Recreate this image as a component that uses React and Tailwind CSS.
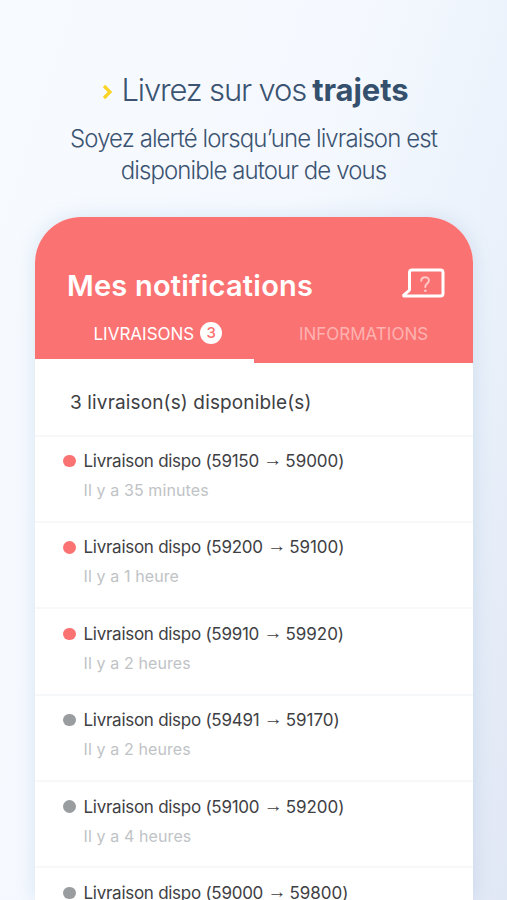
import React from "react";

const deliveries = [
  { from: "59150", to: "59000", time: "Il y a 35 minutes", unread: true },
  { from: "59200", to: "59100", time: "Il y a 1 heure", unread: true },
  { from: "59910", to: "59920", time: "Il y a 2 heures", unread: true },
  { from: "59491", to: "59170", time: "Il y a 2 heures", unread: false },
  { from: "59100", to: "59200", time: "Il y a 4 heures", unread: false },
  { from: "59000", to: "59800", time: "", unread: false },
];

const HelpIcon = () => (
  <svg className="h-[32px] w-[44px]" viewBox="0 0 44 32" fill="none">
    <path
      d="M7.500 22V4.500Q7.500 2 10 2H38.500Q41 2 41 4.500V25.500Q41 28 38.500 28H1.800Q1.400 27.200 2.200 26.600L6.200 23.400Q7.500 22.700 7.500 21.500"
      stroke="white"
      strokeWidth="3"
      strokeLinejoin="round"
    />
    <path
      d="M19.300 12.800C19.300 7.900 26.900 8.200 26.900 12.500C26.900 15.800 23.300 15.400 23.300 19"
      stroke="#ffc9c9"
      strokeWidth="2"
      strokeLinecap="round"
    />
    <circle cx="23.300" cy="22.700" r="1.300" fill="#ffc9c9" />
  </svg>
);

const DeliveryRow = ({ delivery }) => (
  <li className="h-[86.400px] border-b-2 border-[#f7f8f9] pl-[28px] pt-[12.500px]">
    <div className="flex h-6 items-center">
      <span
        className={`mr-[8px] size-[12.500px] rounded-full ${
          delivery.unread ? "bg-[#fb7273]" : "bg-[#9a9d9f]"
        }`}
      />
      <p className="flex items-center whitespace-pre text-[17px] leading-6 tracking-[-0.270px] text-[#3e4043]">
        <span>Livraison dispo ({delivery.from}</span>
        <span className="relative -top-px ml-[4.500px] mr-[3px] font-['Liberation_Sans',sans-serif] text-[19px] font-bold tracking-normal">
          →
        </span>
        <span className="tracking-[-0.050px]">{delivery.to})</span>
      </p>
    </div>
    <p className="mt-[5px] pl-[20.500px] text-[16px] leading-6 tracking-[0.110px] text-[#c0c3c6]">
      {delivery.time}
    </p>
  </li>
);

const App = () => {
  return (
    <main className="flex h-[900px] w-[507px] flex-col overflow-hidden bg-[linear-gradient(108deg,#f7fbff_0%,#f5f9ff_45%,#ebf2fb_70%,#e1e8f5_100%)] font-['Inter',sans-serif]">
      <header className="h-[217px] shrink-0 pt-[70px] text-center text-[#3c5471]">
        <h1 className="flex h-10 items-center justify-center whitespace-pre pl-[3px] text-[31px] font-light tracking-[-1.150px]">
          <svg className="mr-[9px] mt-[3px] h-[16px] w-[11px]" viewBox="0 0 11 16" fill="none">
            <path d="M2 2L8 8L2 14" stroke="#fbd226" strokeWidth="3.200" />
          </svg>
          Livrez sur vos{" "}
          <span className="-ml-[1.500px] font-bold tracking-[-0.100px] text-[#34506d]">trajets</span>
        </h1>
        <p className="mt-[13px] text-[24px] font-light leading-8 tracking-[-0.920px]">
          Soyez alerté lorsqu’une livraison est
          <br />
          disponible autour de vous
        </p>
      </header>

      <section className="ml-[35px] h-[683px] w-[438px] shrink-0 rounded-t-[46px] bg-white shadow-[0_0_20px_rgba(80,130,180,0.180)]">
        <div className="flex h-[145.500px] flex-col rounded-t-[46px] bg-[#fb7273] text-white">
          <div className="flex h-[98px] items-end justify-between pl-[32px] pr-[27.500px]">
            <h2 className="mb-[9px] text-[29px] font-semibold leading-10 tracking-[0.220px]">
              Mes notifications
            </h2>
            <div className="mb-[15px]">
              <HelpIcon />
            </div>
          </div>
          <nav className="flex flex-1 text-[17px]">
            <div className="flex w-1/2 border-b-[4px] border-white pl-[58.500px] pt-[7px]">
              <span className="leading-[25px]">LIVRAISONS</span>
              <span className="ml-[6px] flex size-[22px] items-center justify-center rounded-full bg-white text-[15px] font-medium text-[#fb7273]">
                3
              </span>
            </div>
            <div className="w-1/2 pt-[7px] text-center leading-[25px] text-[#fdb3b0]">
              INFORMATIONS
            </div>
          </nav>
        </div>
        <p className="h-[74px] border-b-2 border-[#f7f8f9] pl-[35px] pt-[26px] text-[19px] leading-7 tracking-[0.140px] text-[#3e4043]">
          3 livraison(s) disponible(s)
        </p>
        <ul className="h-[463px] overflow-hidden">
          {deliveries.map((delivery, index) => (
            <DeliveryRow key={index} delivery={delivery} />
          ))}
        </ul>
      </section>
    </main>
  );
};

export default App;
